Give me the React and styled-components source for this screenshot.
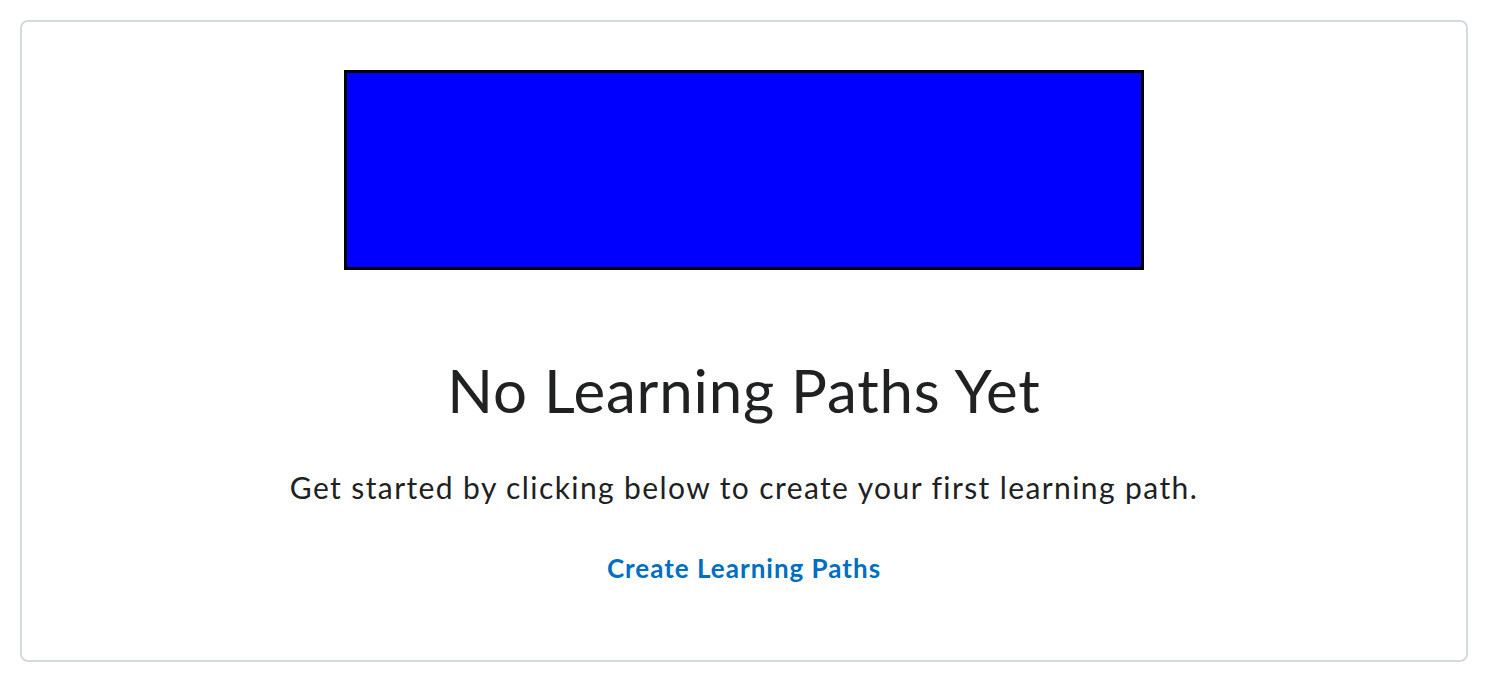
import React from "react";
import styled, { createGlobalStyle } from "styled-components";

const GlobalStyle = createGlobalStyle`
  html, body { margin: 0; padding: 0; background: #ffffff; }
  body { font-family: Lato, "Noto Sans", sans-serif; color: #202122; }
  * { box-sizing: border-box; }
`;

const Page = styled.div`
  padding: 20px;
`;

const Card = styled.section`
  border: 2px solid #d3d9e0;
  border-radius: 8px;
  height: 642px;
  display: flex;
  flex-direction: column;
  align-items: center;
  padding-top: 48px;
`;

const Illustration = styled.div`
  width: 800px;
  height: 200px;
  background: #0000ff;
  border: 3px solid #000000;
`;

const Title = styled.h2`
  margin: 84px 0 0;
  font-size: 60px;
  font-weight: 400;
  line-height: 72px;
  letter-spacing: 0.8px;
  color: #202122;
`;

const Description = styled.p`
  margin: 41px 0 0;
  font-size: 30px;
  line-height: 40px;
  letter-spacing: 1.4px;
  color: #202122;
`;

const CreateLink = styled.a`
  margin-top: 45px;
  font-size: 26px;
  font-weight: 700;
  line-height: 32px;
  letter-spacing: 1px;
  color: #006fbf;
  text-decoration: none;
  cursor: pointer;
`;

export default function App() {
  return (
    <>
      <GlobalStyle />
      <Page>
        <Card>
          <Illustration />
          <Title>No Learning Paths Yet</Title>
          <Description>Get started by clicking below to create your first learning path.</Description>
          <CreateLink href="#">Create Learning Paths</CreateLink>
        </Card>
      </Page>
    </>
  );
}
